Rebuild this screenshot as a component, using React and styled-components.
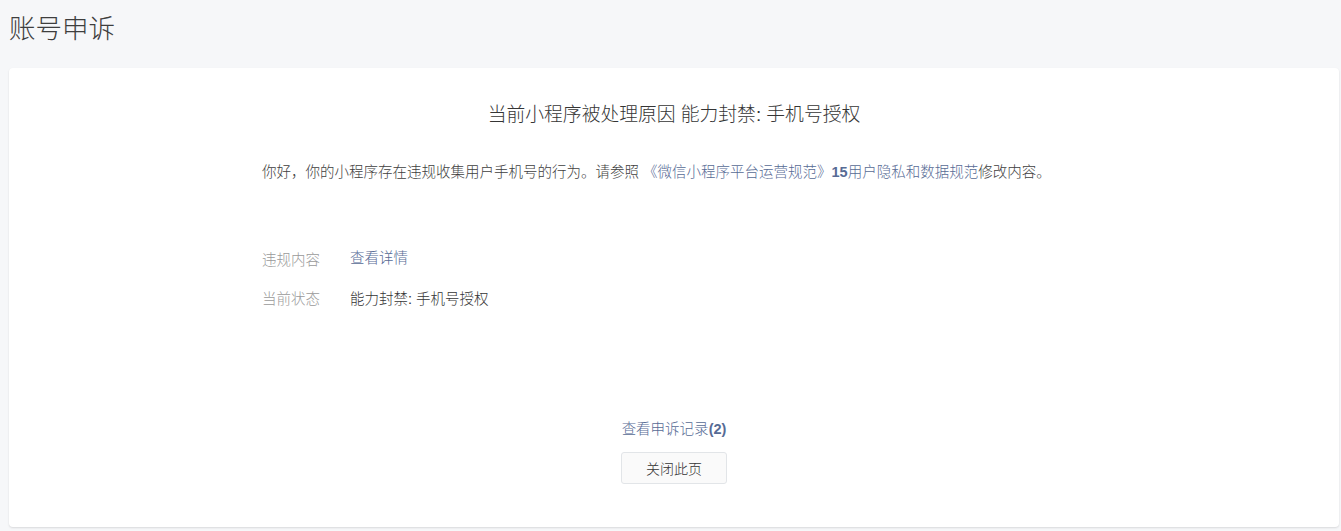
import React from "react";
import styled, { createGlobalStyle } from "styled-components";

const GlobalStyle = createGlobalStyle`
  html, body {
    margin: 0;
    padding: 0;
    background: #f6f7f9;
    font-family: "Liberation Sans", "Noto Sans CJK SC", sans-serif;
    color: #353535;
  }
`;

export default function App() {
  return (
    <>
      <GlobalStyle />
      <Page>
        <PageTitle>账号申诉</PageTitle>
        <Card>
          <Heading>当前小程序被处理原因 能力封禁: 手机号授权</Heading>
          <Content>
            <Notice>
              你好，你的小程序存在违规收集用户手机号的行为。请参照{" "}
              <Link>《微信小程序平台运营规范》</Link>
              <Link>
                <b>15</b>用户隐私和数据规范
              </Link>
              修改内容。
            </Notice>
            <InfoList>
              <InfoRow>
                <Label>违规内容</Label>
                <Link>查看详情</Link>
              </InfoRow>
              <InfoRow>
                <Label>当前状态</Label>
                <Value>能力封禁: 手机号授权</Value>
              </InfoRow>
            </InfoList>
          </Content>
          <Footer>
            <Link>
              查看申诉记录<b>(2)</b>
            </Link>
            <Button>关闭此页</Button>
          </Footer>
        </Card>
      </Page>
    </>
  );
}

const Page = styled.div`
  padding: 0 2px 4px 9px;
`;

const PageTitle = styled.h1`
  margin: 0;
  padding-top: 11px;
  height: 68px;
  box-sizing: border-box;
  font-size: 26.5px;
  line-height: 36px;
  font-weight: 300;
  color: #3e3e3e;
`;

const Card = styled.div`
  background: #fff;
  border-radius: 4px;
  box-shadow: 0 1px 2px rgba(0, 0, 0, 0.12);
  padding: 34px 20px 43px;
  display: flex;
  flex-direction: column;
  align-items: center;
`;

const Heading = styled.h2`
  margin: 0;
  font-size: 18.8px;
  line-height: 26px;
  font-weight: 300;
  color: #353535;
`;

const Content = styled.div`
  width: 824px;
  margin-top: 33px;
`;

const Notice = styled.p`
  margin: 0;
  font-size: 14.5px;
  line-height: 22px;
  font-weight: 300;
  color: #3e3e3e;
  white-space: nowrap;

  b {
    font-weight: 700;
  }
`;

const Link = styled.a`
  color: #576b95;
  text-decoration: none;
  cursor: pointer;
  font-size: 14.5px;
  line-height: 22px;
  font-weight: 300;

  b {
    font-weight: 700;
  }
`;

const InfoList = styled.div`
  margin-top: 64px;
  display: flex;
  flex-direction: column;
  gap: 17px;
`;

const InfoRow = styled.div`
  display: flex;
  align-items: center;
  height: 22px;
`;

const Label = styled.span`
  width: 88px;
  font-size: 14.5px;
  font-weight: 300;
  color: #9a9a9a;
`;

const Value = styled.span`
  font-size: 14.5px;
  font-weight: 300;
  color: #353535;
`;

const Footer = styled.div`
  margin-top: 110px;
  display: flex;
  flex-direction: column;
  align-items: center;
  gap: 12px;
`;

const Button = styled.button`
  width: 106px;
  height: 32px;
  border: 1px solid #e2e5e8;
  border-radius: 3px;
  background: #fafafa;
  color: #353535;
  font-family: "Liberation Sans", "Noto Sans CJK SC", sans-serif;
  font-size: 14px;
  font-weight: 300;
  cursor: pointer;
`;
